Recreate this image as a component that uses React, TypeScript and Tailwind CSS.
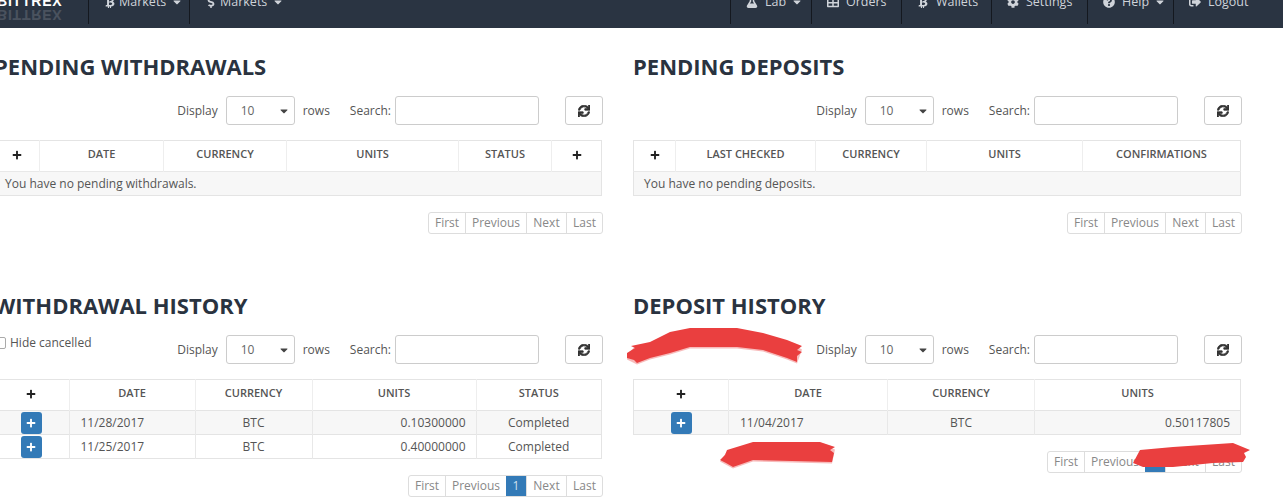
import { FaBtc, FaCaretDown, FaCog, FaDollarSign, FaFlask, FaPlus, FaQuestionCircle, FaSignOutAlt, FaSync, FaTable } from 'react-icons/fa';
import type { ReactNode } from 'react';

function NavItem({ icon, label, caret, className, tight }: { icon: ReactNode; label: string; caret?: boolean; className: string; tight?: boolean }) {
  return (
    <div className={`h-[24px] border-l border-[#14181f] pl-[15px] ${className}`}>
      <div className={`-mt-[5px] flex h-[14px] items-center ${tight ? 'gap-[3px]' : 'gap-[7px]'}`}>
        <span className="text-[12px]">{icon}</span>
        <span>{label}</span>
        {caret && <FaCaretDown className={`text-[12px] ${tight ? 'ml-[2px]' : '-ml-[2px]'}`} />}
      </div>
    </div>
  );
}

function Toolbar({ left }: { left?: ReactNode }) {
  return (
    <div className="flex h-[29px] items-start justify-between">
      <div className="-mt-[1px]">{left}</div>
      <div className="flex h-[29px] items-center text-[12px] text-[#555]">
        <span>Display</span>
        <div className="ml-[8px] flex h-[29px] w-[69px] items-center justify-between rounded-[3px] border border-[#ccc] pl-[14px] pr-[4px] pt-[1px] text-[#666]">
          <span>10</span>
          <FaCaretDown className="text-[12px] text-[#444]" />
        </div>
        <span className="ml-[8px]">rows</span>
        <span className="ml-[20px]">Search:</span>
        <div className="ml-[4px] h-[29px] w-[144px] rounded-[3px] border border-[#ccc]" />
        <div className="ml-[26px] flex h-[29px] w-[38px] items-center justify-center rounded-[3px] border border-[#ccc] text-[12px] text-[#333]">
          <FaSync className="stroke-[30]" />
        </div>
      </div>
    </div>
  );
}

function Pager({ active, className }: { active?: boolean; className: string }) {
  const cell = 'flex h-full items-center justify-center border-l border-[#ddd] first:border-l-0';
  return (
    <div className={`flex justify-end ${className}`}>
      <div className="flex h-[22px] overflow-hidden rounded-[3px] border border-[#ddd] text-[12px] text-[#888]">
        <span className={`${cell} w-[36px]`}>First</span>
        <span className={`${cell} w-[61px]`}>Previous</span>
        {active && <span className={`${cell} w-[20px] border-l-0 bg-[#337ab7] text-[#cfe0ef]`}>1</span>}
        <span className={`${cell} w-[40px]`}>Next</span>
        <span className={`${cell} w-[36px]`}>Last</span>
      </div>
    </div>
  );
}

function PlusHead() {
  return <FaPlus className="mx-auto text-[10px] text-[#222]" />;
}

function PlusBtn() {
  return (
    <div className="mx-auto flex h-[22px] w-[21px] items-center justify-center rounded-[3px] bg-[#337ab7] text-[10px] text-white">
      <FaPlus />
    </div>
  );
}

const th = 'h-[31px] border-l border-[#eee] p-0 pb-[3px] text-center text-[11px] font-semibold text-[#555] first:border-l-0';
const td = 'h-[24px] border-l border-[#e8e8e8] p-0 text-[12px] text-[#555] first:border-l-0';

function App() {
  return (
    <div className="relative h-[504px] w-[1283px] overflow-hidden bg-white font-['Open_Sans',sans-serif]">
      {/* top nav, the screenshot cuts it off */}
      <div className="h-[28px] overflow-hidden bg-[#2a3442]">
        <div className="flex text-[12.5px] text-[#cfd3d9]">
          <div className="w-[88px] font-['Liberation_Sans',sans-serif] text-[14px] font-bold leading-[14px] tracking-[0.8px] text-white">
            <div className="-ml-[3px] -mt-[6px]">BITTREX</div>
            <div className="-ml-[3px] -scale-y-100 opacity-15">BITTREX</div>
          </div>
          <NavItem tight icon={<FaBtc />} label="Markets" caret className="w-[101px]" />
          <NavItem tight icon={<FaDollarSign />} label="Markets" caret className="w-[100px]" />
          <div className="ml-auto flex">
            <NavItem icon={<FaFlask />} label="Lab" caret className="w-[81px]" />
            <NavItem icon={<FaTable />} label="Orders" className="w-[90px]" />
            <NavItem icon={<FaBtc />} label="Wallets" className="w-[90px]" />
            <NavItem icon={<FaCog />} label="Settings" className="w-[96px]" />
            <NavItem icon={<FaQuestionCircle />} label="Help" caret className="w-[86px]" />
            <NavItem icon={<FaSignOutAlt />} label="Logout" className="w-[110px]" />
          </div>
        </div>
      </div>

      <div className="-ml-[6px] grid w-[1248px] grid-cols-2 gap-x-[30px]">
        <section className="pt-[23px]">
          <h2 className="h-[30px] text-[22px] font-bold leading-[30px] text-[#2a3340]">PENDING WITHDRAWALS</h2>
          <div className="mt-[15px]"><Toolbar /></div>
          <table className="mt-[15px] w-[608px] table-fixed border-collapse border border-[#e4e4e4]">
            <colgroup>
              <col className="w-[45px]" /><col className="w-[124px]" /><col className="w-[123px]" /><col className="w-[172px]" /><col className="w-[93px]" /><col />
            </colgroup>
            <thead>
              <tr>
                <th className={th}><PlusHead /></th>
                <th className={th}>DATE</th>
                <th className={th}>CURRENCY</th>
                <th className={th}>UNITS</th>
                <th className={th}>STATUS</th>
                <th className={th}><PlusHead /></th>
              </tr>
            </thead>
            <tbody>
              <tr className="bg-[#f7f7f7]">
                <td colSpan={6} className={`${td} border-t border-[#e4e4e4] pl-[10px]`}>You have no pending withdrawals.</td>
              </tr>
            </tbody>
          </table>
          <Pager className="mt-[16px]" />
        </section>

        <section className="pt-[23px]">
          <h2 className="h-[30px] text-[22px] font-bold leading-[30px] text-[#2a3340]">PENDING DEPOSITS</h2>
          <div className="mt-[15px]"><Toolbar /></div>
          <table className="mt-[15px] w-[608px] table-fixed border-collapse border border-[#e4e4e4]">
            <colgroup>
              <col className="w-[42px]" /><col className="w-[140px]" /><col className="w-[111px]" /><col className="w-[156px]" /><col />
            </colgroup>
            <thead>
              <tr>
                <th className={th}><PlusHead /></th>
                <th className={th}>LAST CHECKED</th>
                <th className={th}>CURRENCY</th>
                <th className={th}>UNITS</th>
                <th className={th}>CONFIRMATIONS</th>
              </tr>
            </thead>
            <tbody>
              <tr className="bg-[#f7f7f7]">
                <td colSpan={5} className={`${td} border-t border-[#e4e4e4] pl-[10px]`}>You have no pending deposits.</td>
              </tr>
            </tbody>
          </table>
          <Pager className="mt-[16px]" />
        </section>

        <section className="pt-[56px]">
          <h2 className="h-[30px] text-[22px] font-bold leading-[30px] text-[#2a3340]">WITHDRAWAL HISTORY</h2>
          <div className="mt-[15px]">
            <Toolbar left={
              <label className="flex items-center gap-[4px] text-[12px] text-[#555]">
                <span className="h-[12px] w-[12px] rounded-[2px] border border-[#aaa] bg-white" />
                Hide cancelled
              </label>
            } />
          </div>
          <table className="mt-[15px] w-[608px] table-fixed border-collapse border-y border-r border-[#e4e4e4]">
            <colgroup>
              <col className="w-[75px]" /><col className="w-[126px]" /><col className="w-[117px]" /><col className="w-[164px]" /><col />
            </colgroup>
            <thead>
              <tr>
                <th className={th}><PlusHead /></th>
                <th className={th}>DATE</th>
                <th className={th}>CURRENCY</th>
                <th className={th}>UNITS</th>
                <th className={th}>STATUS</th>
              </tr>
            </thead>
            <tbody>
              <tr className="border-t border-[#e4e4e4] bg-[#f7f7f7]">
                <td className={td}><PlusBtn /></td>
                <td className={`${td} pl-[11px]`}>11/28/2017</td>
                <td className={`${td} text-center`}>BTC</td>
                <td className={`${td} pr-[10px] text-right`}>0.10300000</td>
                <td className={`${td} text-center`}>Completed</td>
              </tr>
              <tr className="border-t border-[#e4e4e4]">
                <td className={td}><PlusBtn /></td>
                <td className={`${td} pl-[11px]`}>11/25/2017</td>
                <td className={`${td} text-center`}>BTC</td>
                <td className={`${td} pr-[10px] text-right`}>0.40000000</td>
                <td className={`${td} text-center`}>Completed</td>
              </tr>
            </tbody>
          </table>
          <Pager active className="mt-[16px]" />
        </section>

        <section className="pt-[56px]">
          <h2 className="h-[30px] text-[22px] font-bold leading-[30px] text-[#2a3340]">DEPOSIT HISTORY</h2>
          <div className="mt-[15px]"><Toolbar /></div>
          <table className="mt-[15px] w-[608px] table-fixed border-collapse border border-[#e4e4e4]">
            <colgroup>
              <col className="w-[95px]" /><col className="w-[159px]" /><col className="w-[147px]" /><col />
            </colgroup>
            <thead>
              <tr>
                <th className={th}><PlusHead /></th>
                <th className={th}>DATE</th>
                <th className={th}>CURRENCY</th>
                <th className={th}>UNITS</th>
              </tr>
            </thead>
            <tbody>
              <tr className="border-t border-[#e4e4e4] bg-[#f7f7f7]">
                <td className={td}><PlusBtn /></td>
                <td className={`${td} pl-[11px]`}>11/04/2017</td>
                <td className={`${td} text-center`}>BTC</td>
                <td className={`${td} pr-[10px] text-right`}>0.50117805</td>
              </tr>
            </tbody>
          </table>
          <Pager active className="mt-[16px]" />
        </section>
      </div>

      {/* red scribbles over the picture */}
      <svg className="pointer-events-none absolute left-0 top-0" width="1283" height="504" viewBox="0 0 1283 504" fill="#ea3f3f">
        <g transform="translate(0 1.5)" opacity="0.35">
          <path d="M627 353 L635 345 L650 342 L670 332 L690 328 L737 328 L763 333 L787 340 L802 348 L797 362 L787 358 L763 350 L737 347 L690 347 L670 353 L650 358 L637 363 L627 358 Z" />
          <path d="M720 460 L727 450 L753 442 L820 442 L835 448 L832 462 L753 460 L733 467 Z" />
        </g>
        <path d="M627 353 L635 348 L631 346 L650 342 L670 332 L690 328 L737 328 L763 333 L787 340 L802 346 L797 350 L802 352 L797 356 L797 362 L787 358 L763 350 L737 347 L690 347 L670 353 L650 358 L637 363 L634 360 L627 358 Z" />
        <path d="M720 460 L725 455 L727 450 L753 442 L820 442 L835 447 L830 450 L834 453 L832 462 L753 460 L733 467 L726 463 Z" />
        <path d="M1133 463 L1140 450 L1173 447 L1233 443 L1250 450 L1244 453 L1246 457 L1243 462 L1213 463 L1173 467 L1143 467 Z" />
      </svg>
    </div>
  );
}

export default App;
